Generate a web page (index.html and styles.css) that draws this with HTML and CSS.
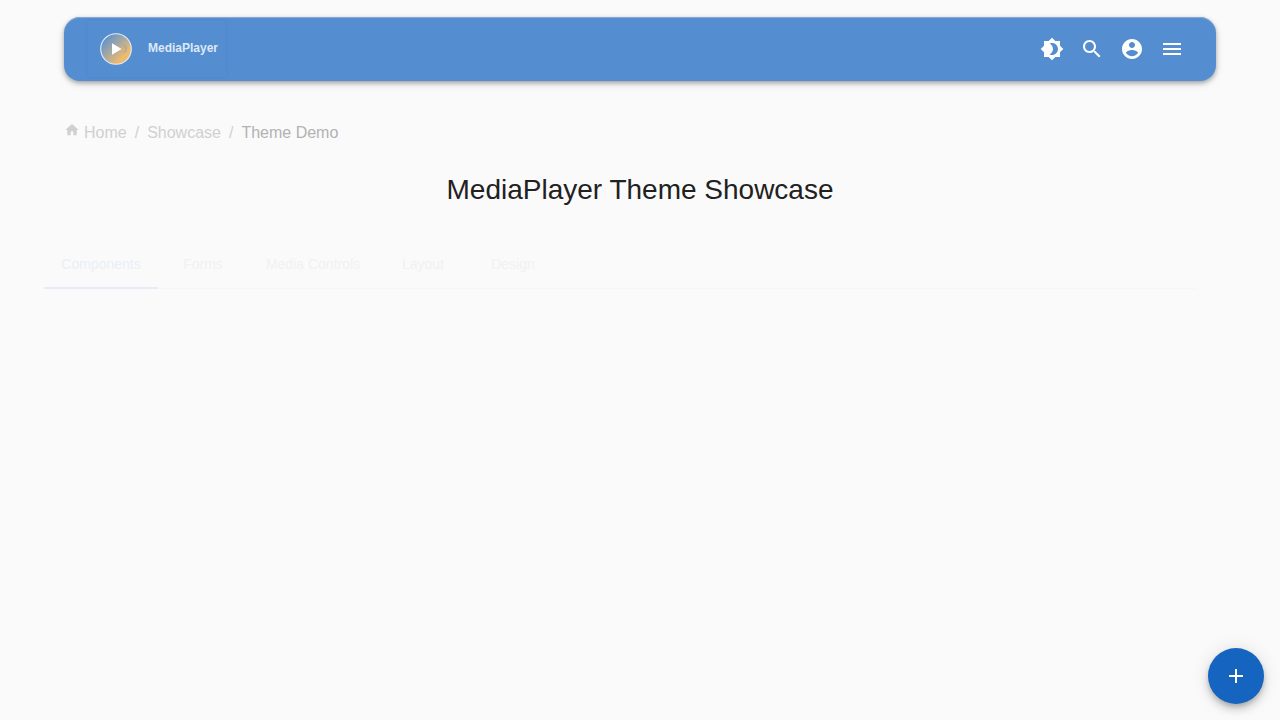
FILE: index.html
```html
<!DOCTYPE html>
<html lang="en">
<head>
<meta charset="utf-8">
<meta name="viewport" content="width=device-width, initial-scale=1">
<title>MediaPlayer Theme Showcase</title>
<link rel="stylesheet" href="styles.css">
</head>
<body>
<header class="toolbar">
  <a class="brand" href="#">
    <svg class="brand-logo" viewBox="0 0 32 32" aria-hidden="true">
      <defs>
        <linearGradient id="disc" x1="0" y1="0" x2="1" y2="1">
          <stop offset="0.1" stop-color="#5791cf"/>
          <stop offset="0.5" stop-color="#b1ab9c"/>
          <stop offset="0.75" stop-color="#efba6c"/>
          <stop offset="1" stop-color="#efba6c"/>
        </linearGradient>
      </defs>
      <circle cx="16" cy="16" r="15.3" fill="url(#disc)" stroke="#e3edf7" stroke-width="1.1"/>
      <path d="M12 10.2v11.6L21.6 16z" fill="#fff"/>
      <path d="M24 12q4.5 4 0 8" fill="none" stroke="#a9a69f" stroke-width="1.2"/>
    </svg>
    <span class="brand-name">MediaPlayer</span>
  </a>
  <div class="actions">
    <button class="icon-button" type="button" aria-label="Toggle theme"><svg viewBox="0 0 24 24"><path d="M20 8.69V4h-4.69L12 .69 8.69 4H4v4.69L.69 12 4 15.31V20h4.69L12 23.31 15.31 20H20v-4.69L23.31 12 20 8.69zM12 18c-.89 0-1.74-.2-2.5-.55C11.56 16.5 13 14.42 13 12s-1.44-4.5-3.5-5.45C10.26 6.2 11.11 6 12 6c3.31 0 6 2.69 6 6s-2.69 6-6 6z"/></svg></button>
    <button class="icon-button" type="button" aria-label="Search"><svg viewBox="0 0 24 24"><path d="M15.5 14h-.79l-.28-.27C15.41 12.59 16 11.11 16 9.5 16 5.91 13.09 3 9.5 3S3 5.91 3 9.5 5.91 16 9.5 16c1.61 0 3.09-.59 4.23-1.57l.27.28v.79l5 4.99L20.49 19l-4.99-5zm-6 0C7.01 14 5 11.99 5 9.5S7.01 5 9.5 5 14 7.01 14 9.5 11.99 14 9.5 14z"/></svg></button>
    <button class="icon-button" type="button" aria-label="Account"><svg viewBox="0 0 24 24"><path d="M12 2C6.48 2 2 6.48 2 12s4.48 10 10 10 10-4.48 10-10S17.52 2 12 2zm0 3c1.66 0 3 1.34 3 3s-1.34 3-3 3-3-1.34-3-3 1.34-3 3-3zm0 14.2c-2.5 0-4.71-1.28-6-3.22.03-1.99 4-3.08 6-3.08 1.99 0 5.97 1.09 6 3.08-1.29 1.94-3.5 3.22-6 3.22z"/></svg></button>
    <button class="icon-button" type="button" aria-label="Menu"><svg viewBox="0 0 24 24"><path d="M3 18h18v-2H3v2zm0-5h18v-2H3v2zm0-7v2h18V6H3z"/></svg></button>
  </div>
</header>
<main>
  <nav class="breadcrumb" aria-label="Breadcrumb">
    <a href="#"><svg class="home-icon" viewBox="0 0 24 24" aria-hidden="true"><path d="M10 20v-6h4v6h5v-8h3L12 3 2 12h3v8z"/></svg>Home</a>
    <span>/</span>
    <a href="#">Showcase</a>
    <span>/</span>
    <span class="current" aria-current="page">Theme Demo</span>
  </nav>
  <h1 class="title">MediaPlayer Theme Showcase</h1>
  <div class="tabs" role="tablist">
    <button class="tab active" type="button" role="tab" aria-selected="true">Components</button>
    <button class="tab" type="button" role="tab" aria-selected="false">Forms</button>
    <button class="tab" type="button" role="tab" aria-selected="false">Media Controls</button>
    <button class="tab" type="button" role="tab" aria-selected="false">Layout</button>
    <button class="tab" type="button" role="tab" aria-selected="false">Design</button>
  </div>
</main>
<button class="fab" type="button" aria-label="Add"><svg viewBox="0 0 24 24"><path d="M19 13h-6v6h-2v-6H5v-2h6V5h2v6h6v2z"/></svg></button>
</body>
</html>
```
FILE: styles.css
```css
* { box-sizing: border-box; }
body {
  margin: 0;
  padding-top: 17px;
  background: #fafafa;
  color: #212121;
  font-family: "Liberation Sans", Arial, sans-serif;
}
button {
  padding: 0;
  border: 0;
  background: none;
  font-family: inherit;
}
.toolbar {
  display: flex;
  align-items: center;
  justify-content: space-between;
  min-height: 64px;
  margin: 0 5%;
  padding: 0 24px;
  border-radius: 16px;
  background: #548ed1;
  box-shadow: inset 0 1px #87abd6, 0 2px 4px rgba(0, 0, 0, 0.28), 0 3px 8px rgba(0, 0, 0, 0.12);
}
.brand {
  display: flex;
  align-items: center;
  gap: 16px;
  padding: 12px 8px 12px 12px;
  color: #dde8f5;
  text-decoration: none;
  box-shadow: 0 0 3px rgba(30, 80, 150, 0.12);
}
.brand-logo { width: 32px; height: 32px; }
.brand-name {
  font-size: 12px;
  font-weight: 700;
  line-height: 16px;
  padding-bottom: 2px;
}
.actions { display: flex; }
.icon-button {
  display: grid;
  place-items: center;
  width: 40px;
  height: 40px;
}
.icon-button svg, .fab svg { width: 24px; height: 24px; fill: #fff; }
.breadcrumb {
  display: flex;
  gap: 8px;
  margin: 41px 5% 0;
  color: #d0d0d0;
  font-size: 16px;
  line-height: 22px;
}
.breadcrumb a {
  display: flex;
  gap: 4px;
  color: inherit;
  text-decoration: none;
}
.home-icon { width: 16px; height: 16px; fill: currentColor; }
.breadcrumb .current { color: #b2b2b2; }
.title {
  margin: 30px 0 0;
  font-size: 28px;
  font-weight: 400;
  line-height: 32px;
  text-align: center;
}
.tabs {
  display: grid;
  grid-template-columns: 114px 90px 130px 90px 90px;
  width: 90%;
  height: 49px;
  margin: 34px 0 0 44px;
  border-bottom: 1px solid #f6f6f6;
}
.tab {
  margin-bottom: -1px;
  border-bottom: 2px solid transparent;
  color: #f1f1f2;
  font-size: 14px;
  line-height: 20px;
}
.tab.active { border-color: #e7edf7; color: #e9eff8; }
.fab {
  position: fixed;
  right: 16px;
  bottom: 16px;
  display: grid;
  place-items: center;
  width: 56px;
  height: 56px;
  border-radius: 50%;
  background: #1565c0;
  box-shadow: 0 3px 5px -1px rgba(0, 0, 0, 0.2), 0 6px 10px rgba(0, 0, 0, 0.14), 0 1px 18px rgba(0, 0, 0, 0.12);
}
```
